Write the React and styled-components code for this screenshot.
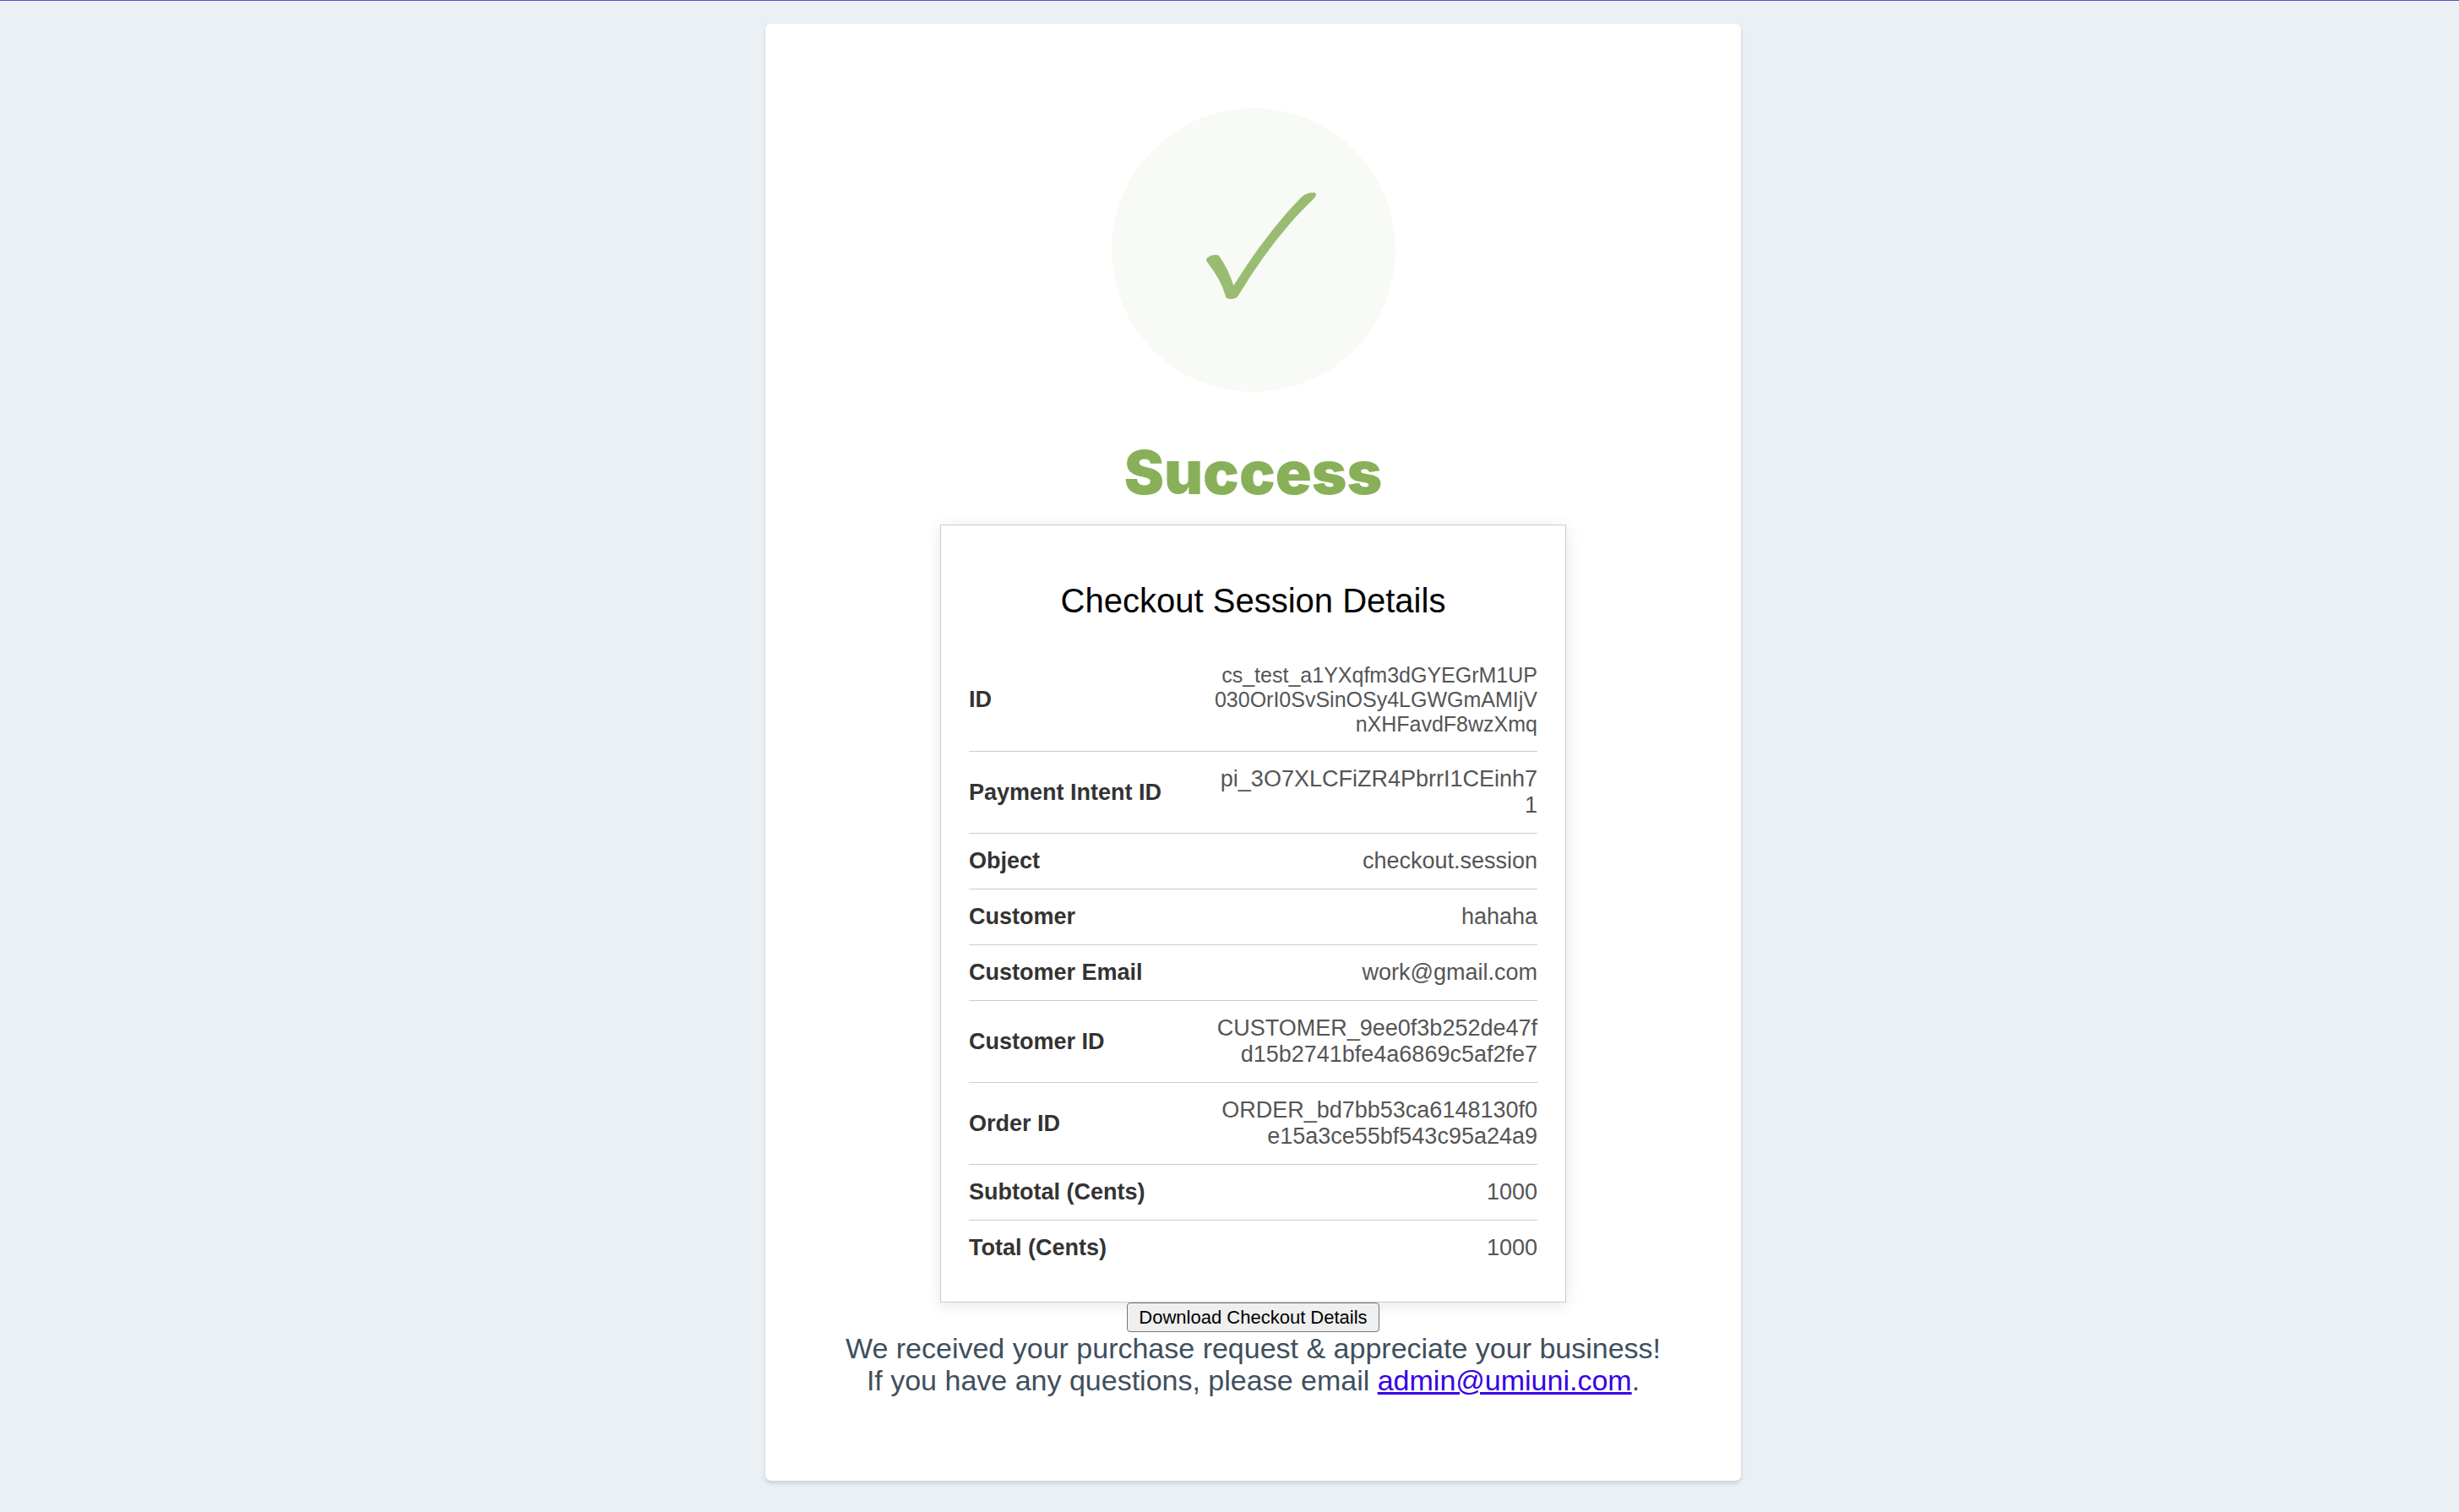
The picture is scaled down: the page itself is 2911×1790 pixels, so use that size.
import React from "react";
import styled, { createGlobalStyle } from "styled-components";

const GlobalStyle = createGlobalStyle`
  *, *::before, *::after { box-sizing: border-box; }
  body {
    margin: 0;
    background: #ebf0f5;
    font-family: "Liberation Sans", Arial, sans-serif;
  }
  #root { min-height: 100vh; }
`;

const Page = styled.main`
  display: flex;
  justify-content: center;
  align-items: flex-start;
  min-height: 100vh;
  padding: 27px 0 34px 56px;
  border-top: 1px solid #6a48b4;
`;

const Card = styled.section`
  display: flex;
  flex-direction: column;
  align-items: center;
  width: 1155px;
  max-width: 100%;
  padding: 100px 90px;
  border-radius: 7px;
  background: #ffffff;
  box-shadow: 0 3px 5px #c8d0d8;
`;

const Badge = styled.div`
  width: 336px;
  height: 336px;
  border-radius: 50%;
  background: #f8faf5;
`;

const CheckIcon = styled.svg`
  display: block;
  width: 100%;
  height: 100%;
  fill: #9abc72;
`;

const Heading = styled.h1`
  margin: 48px 0 15px;
  color: #88b058;
  font-family: Inter, "Liberation Sans", sans-serif;
  font-size: 71px;
  font-weight: 900;
  line-height: 94px;
`;

const Details = styled.section`
  width: 741px;
  max-width: 100%;
  padding: 33px 33px 32px;
  border: 1px solid #cccccc;
  background: #ffffff;
  box-shadow: 0 3px 17px rgba(0, 0, 0, 0.1);
`;

const DetailsTitle = styled.h2`
  margin: 33px 0;
  color: #000000;
  font-size: 40px;
  font-weight: 400;
  line-height: 47px;
  text-align: center;
`;

const List = styled.dl`
  margin: 0;
`;

const Row = styled.div`
  display: flex;
  align-items: center;
  justify-content: space-between;
  padding: 17px 0;
  border-bottom: 1px solid #cccccc;
  font-size: 27px;
  line-height: 31px;

  &:last-child {
    padding-bottom: 16px;
    border-bottom: 0;
  }
`;

const Label = styled.dt`
  color: #333333;
  font-weight: 700;
`;

const Value = styled.dd`
  max-width: 386px;
  margin: 0;
  color: #555555;
  font-size: ${(p) => (p.$small ? "25px" : "27px")};
  line-height: ${(p) => (p.$small ? "29px" : "31px")};
  text-align: right;
  word-break: break-all;
`;

const DownloadButton = styled.button`
  padding: 2px 13px;
  border: 1px solid #767676;
  border-radius: 4px;
  background: #efefef;
  color: #000000;
  font-family: inherit;
  font-size: 22px;
  line-height: 29px;
`;

const Message = styled.p`
  margin: 0;
  color: #404f5e;
  font-size: 34px;
  line-height: 38px;
  text-align: center;
`;

const MailLink = styled.a`
  color: #3700e6;
  text-decoration-thickness: 3px;
`;

const rows = [
  { label: "ID", value: "cs_test_a1YXqfm3dGYEGrM1UP030OrI0SvSinOSy4LGWGmAMIjVnXHFavdF8wzXmq", small: true },
  { label: "Payment Intent ID", value: "pi_3O7XLCFiZR4PbrrI1CEinh71" },
  { label: "Object", value: "checkout.session" },
  { label: "Customer", value: "hahaha" },
  { label: "Customer Email", value: "work@gmail.com" },
  { label: "Customer ID", value: "CUSTOMER_9ee0f3b252de47fd15b2741bfe4a6869c5af2fe7" },
  { label: "Order ID", value: "ORDER_bd7bb53ca6148130f0e15a3ce55bf543c95a24a9" },
  { label: "Subtotal (Cents)", value: "1000" },
  { label: "Total (Cents)", value: "1000" },
];

export default function App() {
  return (
    <>
      <GlobalStyle />
      <Page>
        <Card>
          <Badge>
            <CheckIcon viewBox="45 54 1008 1008" aria-hidden="true">
              <path d="M384 601 Q378 591 385 585 Q398 574 418 575 Q424 575 428 581 Q458 622 478 684 Q598 493 718 371 Q736 353 764 354 Q774 356 770 366 C768 371 760 378 752 386 Q617 517 495 719 Q490 727 485 729 Q468 734 455 730 Q452 729 450 723 Q434 664 384 601Z" />
            </CheckIcon>
          </Badge>
          <Heading>Success</Heading>
          <Details>
            <DetailsTitle>Checkout Session Details</DetailsTitle>
            <List>
              {rows.map((row) => (
                <Row key={row.label}>
                  <Label>{row.label}</Label>
                  <Value $small={row.small}>{row.value}</Value>
                </Row>
              ))}
            </List>
          </Details>
          <DownloadButton type="button">Download Checkout Details</DownloadButton>
          <Message>
            We received your purchase request &amp; appreciate your business!
            <br />
            If you have any questions, please email{" "}
            <MailLink href="mailto:admin@umiuni.com">admin@umiuni.com</MailLink>.
          </Message>
        </Card>
      </Page>
    </>
  );
}
